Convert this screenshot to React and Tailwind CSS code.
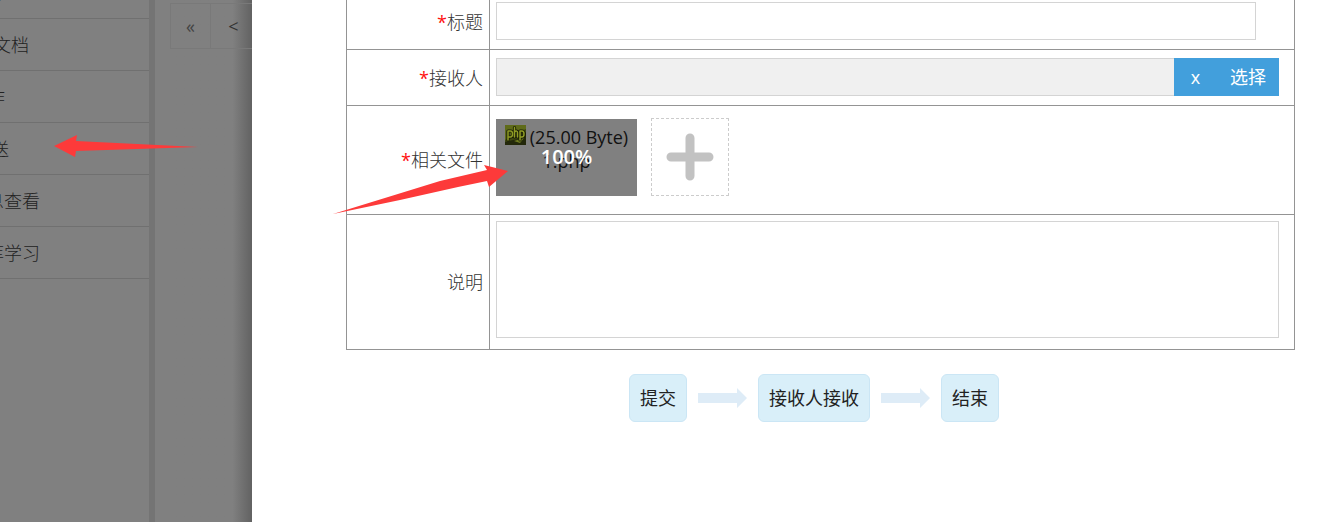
import React from "react";

const menu = [
  { text: "心", width: "w-[5px]" },
  { text: "文档", width: "w-[29px]" },
  { text: "作", width: "w-[5px]" },
  { text: "送", width: "w-[9px]" },
  { text: "息查看", width: "w-[40px]" },
  { text: "库学习", width: "w-[40px]" },
];

function Sidebar() {
  return (
    <nav className="w-[149px] shrink-0 overflow-hidden">
      <ul className="-mt-[33px]">
        {menu.map((item) => (
          <li key={item.text} className="h-[52px] border-b border-[#707070]">
            <a href="#" className="flex h-full items-center text-[#222]">
              <span className={`flex justify-end overflow-hidden whitespace-nowrap ${item.width}`}>
                {item.text}
              </span>
            </a>
          </li>
        ))}
      </ul>
    </nav>
  );
}

function Row({ label, htmlFor, required, height, children }) {
  return (
    <tr className={height}>
      <th className="w-[143px] border border-[#949494] pr-[6px] text-right align-middle font-light">
        <label htmlFor={htmlFor}>
          {required && <span className="font-normal text-[#ff1010]">*</span>}
          {label}
        </label>
      </th>
      <td className="border border-[#949494] pl-[6px] pr-[15px] align-middle">{children}</td>
    </tr>
  );
}

function PhpIcon() {
  return (
    <svg width="21" height="20" viewBox="0 0 21 20" className="shrink-0" aria-hidden="true">
      <rect width="21" height="20" fill="#3f4812" />
      <path d="M0 0h21v4L11 8 0 15z" fill="#5f6b1a" />
      <path d="M0 17l8-2 6-1 7-7v13H0z" fill="#23280a" />
      <path d="M9 16l10-3-4 5z" fill="#6f7c1f" />
      <g fill="none" strokeLinejoin="round" strokeLinecap="round">
        <path d="M3 15V6h2.500q2 0 2 3T5.500 12H3M9.500 2.500v9.500M9.500 7q3-2 3 0.500V12M15 15V6h2q2 0 2 3T17 12h-2" stroke="#181c05" strokeWidth="3.200" />
        <path d="M3 15V6h2.500q2 0 2 3T5.500 12H3M9.500 2.500v9.500M9.500 7q3-2 3 0.500V12M15 15V6h2q2 0 2 3T17 12h-2" stroke="#8f9c24" strokeWidth="1.500" />
      </g>
    </svg>
  );
}

function Step({ children }) {
  return (
    <li className="flex h-12 items-center rounded-md border border-[#cbe6f5] bg-[#d9eff9] px-[10px] text-[#222]">
      {children}
    </li>
  );
}

function StepArrow() {
  return (
    <li aria-hidden="true">
      <svg width="49" height="20" viewBox="0 0 49 20">
        <path d="M0 5h39V0l10 10-10 10v-5H0z" fill="#deecf7" />
      </svg>
    </li>
  );
}

export default function App() {
  return (
    <div className="relative flex h-screen overflow-hidden bg-[#808080] font-['Open_Sans','Noto_Sans_CJK_SC',sans-serif] text-[18px] leading-6 font-light text-[#333]">
      <Sidebar />
      <div className="w-[6px] shrink-0 bg-[#747474]" />
      <div className="flex w-[97px] shrink-0 items-start overflow-hidden bg-linear-to-r from-[#808080] from-80% to-[#626262] pt-[3px] pl-[15px]">
        <button className="h-[46px] w-[41px] shrink-0 border border-[#797979] font-normal text-[#444]">«</button>
        <button className="h-[46px] w-[45px] shrink-0 border-y border-[#797979] font-normal text-[#333]">&lt;</button>
      </div>

      <main className="min-w-0 flex-1 bg-white pr-[47px] pl-[94px] text-[#333]">
        <table className="-mt-[7px] w-full table-fixed border-collapse">
          <tbody>
            <Row label="标题" htmlFor="title" required height="h-[56px]">
              <div className="pr-[23px] pb-px">
                <input id="title" className="block h-[38px] w-full border border-[#d4d4d4] px-2 outline-none" />
              </div>
            </Row>
            <Row label="接收人" htmlFor="receiver" required height="h-[56px]">
              <div className="flex pb-[2px]">
                <input id="receiver" readOnly className="h-[38px] min-w-0 flex-1 border border-r-0 border-[#d4d4d4] bg-[#f0f0f0] px-2 outline-none" />
                <button className="h-[38px] w-[43px] bg-[#429fdc] font-normal text-white">x</button>
                <button className="h-[38px] w-[62px] bg-[#429fdc] font-normal text-white">选择</button>
              </div>
            </Row>
            <Row label="相关文件" htmlFor="files" required height="h-[109px]">
              <div className="flex items-center gap-[14px] pb-[6px]">
                <div className="relative h-[77px] w-[141px] bg-[#808080] pt-[6px] text-center font-normal text-[#111]">
                  <div className="flex justify-center gap-1 whitespace-nowrap">
                    <PhpIcon />
                    <span>(25.00 Byte)</span>
                  </div>
                  <div>1.php</div>
                  <span className="absolute inset-0 flex items-center justify-center text-[20px] font-semibold text-white">100%</span>
                </div>
                <button id="files" aria-label="添加文件" className="flex h-[78px] w-[78px] items-center justify-center border border-dashed border-[#ccc]">
                  <svg width="48" height="48" viewBox="0 0 48 48" aria-hidden="true">
                    <path d="M24 5v38M5 24h38" stroke="#c2c2c2" strokeWidth="9" strokeLinecap="round" />
                  </svg>
                </button>
              </div>
            </Row>
            <Row label="说明" htmlFor="remark" height="h-[135px]">
              <div className="pb-[6px]">
                <textarea id="remark" className="block h-[117px] w-full resize-none border border-[#d4d4d4] p-2 outline-none" />
              </div>
            </Row>
          </tbody>
        </table>

        <ol className="mt-6 flex items-center justify-center gap-[11px] pr-[13px] font-normal">
          <Step>提交</Step>
          <StepArrow />
          <Step>接收人接收</Step>
          <StepArrow />
          <Step>结束</Step>
        </ol>
      </main>

      <svg width="520" height="230" viewBox="0 0 520 230" className="pointer-events-none absolute top-0 left-0" aria-hidden="true">
        <path d="M54 146L77 135L76 141L198 147L76 151L75 157z" fill="#fd3a3a" />
        <path d="M508 171L484 165L487 170L440 181L333 214L400 200L458 187L487 181L489 187z" fill="#fd3a3a" />
      </svg>
    </div>
  );
}
